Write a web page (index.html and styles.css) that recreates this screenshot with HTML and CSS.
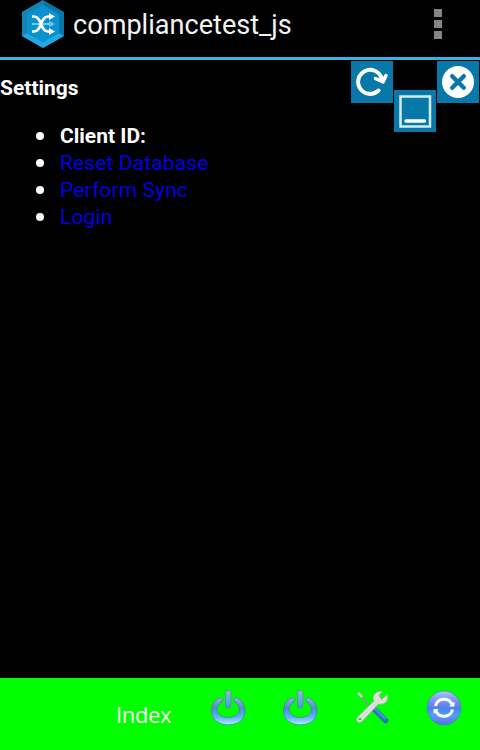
FILE: index.html
```html
<!DOCTYPE html>
<html lang="en">
<head>
<meta charset="utf-8">
<title>compliancetest_js</title>
<link rel="stylesheet" href="styles.css">
</head>
<body>
<header class="bar">
  <svg class="logo" width="42" height="48" viewBox="0 0 42 48">
    <path fill="#0876a7" d="M21 0 42 12V36L21 48 0 36V12Z"/>
    <path fill="#1383b3" d="M0 12 21 0V6L5 14V34L0 36Z"/>
    <path fill="#20a9e2" d="M0 36 5 33 21 42 37 33 42 36 21 48Z"/>
    <path fill="#0b92ce" d="M21 5 37 14V33L21 42 5 33V14Z"/>
    <path d="M10 24H28" stroke="#78c7e7" stroke-width="2"/>
    <path d="M27 21 33 24 27 27Z" fill="#78c7e7"/>
    <path d="M10 16.500H12C20 16.500 18 31.500 26 31.500H29M10 31.500H12C20 31.500 18 16.500 26 16.500H29" fill="none" stroke="#fff" stroke-width="2.600"/>
    <path d="M27 13 33 16.500 27 20ZM27 28 33 31.500 27 35Z" fill="#fff"/>
  </svg>
  <h1 class="title">compliancetest_js</h1>
  <div class="overflow"><i></i><i></i><i></i></div>
</header>
<main class="content">
  <h2 class="heading">Settings</h2>
  <ul class="list">
    <li><b>Client ID:</b></li>
    <li><a href="#">Reset Database</a></li>
    <li><a href="#">Perform Sync</a></li>
    <li><a href="#">Login</a></li>
  </ul>
  <div class="tools">
    <svg class="tool" viewBox="0 0 42 42">
      <path d="M27.500 29.500A12 12 0 1 1 30.500 17" fill="none" stroke="#fff" stroke-width="4" stroke-linecap="round"/>
      <path d="M24.500 17.500 32 21 35 14.500" fill="none" stroke="#fff" stroke-width="3.500" stroke-linecap="round" stroke-linejoin="round"/>
      <path d="M27 17 34 15 31.500 21Z" fill="#fff"/>
    </svg>
    <svg class="tool tool-low" viewBox="0 0 42 42">
      <rect x="6.500" y="6.500" width="29.500" height="30" fill="none" stroke="#d5ebf3" stroke-width="2.500"/>
      <path d="M12 31H30.500" stroke="#fff" stroke-width="3.500" stroke-linecap="round"/>
    </svg>
    <svg class="tool" viewBox="0 0 42 42">
      <circle cx="21" cy="21" r="16" fill="#fff"/>
      <path d="M15.200 15.200 26.800 26.800M26.800 15.200 15.200 26.800" stroke="#0878a8" stroke-width="4.400" stroke-linecap="round"/>
    </svg>
  </div>
</main>
<footer class="footer">
  <span class="index">Index</span>
  <svg class="icon" viewBox="0 0 36 36">
    <defs>
      <linearGradient id="ring" x1="0" y1="0" x2="0" y2="1">
        <stop offset="0" stop-color="#93afd9"/><stop offset=".4" stop-color="#548bd0"/><stop offset=".7" stop-color="#60aef6"/><stop offset="1" stop-color="#a9edff"/>
      </linearGradient>
      <linearGradient id="stem" x1="0" y1="0" x2="0" y2="1">
        <stop offset="0" stop-color="#9ab4da"/><stop offset="1" stop-color="#4797e8"/>
      </linearGradient>
      <g id="power">
        <path d="M9.500 7.800C12 6.500 14 9.500 12 11.700C6.500 15.500 5.500 20.500 9.500 24.500C13.500 28.500 23 28.500 27 24.500C31 20.500 30 15.500 24.500 11.700C22.500 9.500 24.500 6.500 27 7.800C35.500 12 37.500 23 32 29.500C26 36.500 11 36.500 4.500 29.500C-1 23 1 12 9.500 7.800Z" fill="url(#ring)" stroke="#267da5" stroke-width=".6"/>
        <path d="M15.500 2Q15.500 .5 18.200 .5T21 2V15.500Q21 18 18.200 18T15.500 15.500Z" fill="url(#stem)" stroke="#3d87b3" stroke-width=".5"/>
      </g>
    </defs>
    <use href="#power"/>
  </svg>
  <svg class="icon" viewBox="0 0 36 36"><use href="#power"/></svg>
  <svg class="icon" viewBox="0 0 36 36">
    <path d="M6 5 20 22" stroke="#869b88" stroke-width="1.800"/>
    <path d="M3.500 2 6 2.500 9 6 7.500 8 4 5Z" fill="#bfd0bd"/>
    <path d="M19.500 18.500 31.500 30.500" stroke="#2878b5" stroke-width="5.500" stroke-linecap="round"/>
    <path d="M20.500 18 31.500 29" stroke="#4398df" stroke-width="2"/>
    <path d="M19 8C20 3 24 .5 28.500 1.500L25 5.500 27.500 9.500 33.500 4.500C35 10 31 15.500 24.500 14L8.500 31C5 34.500 .5 31 3.500 27L20 11Z" fill="#dedfdc" stroke="#a5aea3" stroke-width=".7"/>
    <circle cx="6" cy="29" r="1.300" fill="#20d820"/>
  </svg>
  <svg class="icon" viewBox="0 0 36 36">
    <defs>
      <linearGradient id="ball" x1="0" y1="0" x2="0" y2="1">
        <stop offset="0" stop-color="#a9c8ed"/><stop offset=".28" stop-color="#7c94f6"/><stop offset=".48" stop-color="#5880ed"/><stop offset=".52" stop-color="#3f8bea"/><stop offset=".72" stop-color="#579cf7"/><stop offset="1" stop-color="#5b70ec"/>
      </linearGradient>
    </defs>
    <circle cx="18" cy="18" r="17" fill="url(#ball)" stroke="#378ea9" stroke-width=".7"/>
    <path d="M9.500 16A8.700 8.700 0 0 1 26 14.500M26.500 19.500A8.700 8.700 0 0 1 10 21" fill="none" stroke="#fff" stroke-width="3"/>
    <path d="M23 16.500H28.500V11.500ZM7.500 19H13L7.500 24Z" fill="#fff"/>
  </svg>
</footer>
</body>
</html>
```

FILE: styles.css
```css
* { box-sizing: border-box; }
body {
  margin: 0;
  height: 750px;
  display: flex;
  flex-direction: column;
  overflow: hidden;
  background: #000;
  color: #fff;
  font-family: Roboto, "Liberation Sans", sans-serif;
}
.bar {
  height: 60px;
  flex: none;
  display: flex;
  align-items: flex-start;
  padding-left: 22px;
  border-bottom: 3px solid #33b5e5;
}
.logo { flex: none; }
.title {
  margin: 9px 0 0 9px;
  font-size: 27.1px;
  line-height: 33px;
  font-weight: 400;
  color: #f3f3f3;
}
.overflow {
  display: grid;
  gap: 3px;
  margin: 9px 38px 0 auto;
}
.overflow i { width: 8px; height: 8px; background: #858585; }
.content { flex: 1; display: flow-root; position: relative; }
.heading {
  margin: 15px 0 21px;
  font-size: 21px;
  line-height: 27px;
  font-weight: 700;
}
.list {
  margin: 0;
  padding-left: 36px;
  font-size: 21px;
  line-height: 27px;
  list-style: none;
}
.list li { display: flex; align-items: center; gap: 16px; height: 27px; }
.list li::before {
  content: "";
  width: 8px;
  height: 8px;
  margin-bottom: 1px;
  border-radius: 50%;
  background: #fff;
}
.list a { color: #0000e0; text-decoration: none; letter-spacing: .12px; }
.tools {
  position: absolute;
  top: 1px;
  right: 1px;
  display: flex;
  gap: 1px;
}
.tool { width: 42px; height: 42px; background: #0878a8; }
.tool-low { margin-top: 29px; }
.footer {
  height: 72px;
  flex: none;
  display: flex;
  align-items: flex-start;
  gap: 36px;
  padding: 12px 0 0 116px;
  background: #0f0;
}
.index {
  width: 58px;
  margin-top: 10px;
  font-family: "Open Sans", "Noto Sans", sans-serif;
  font-size: 22px;
  line-height: 28px;
  letter-spacing: -.35px;
}
.icon { width: 36px; height: 36px; flex: none; }
```
